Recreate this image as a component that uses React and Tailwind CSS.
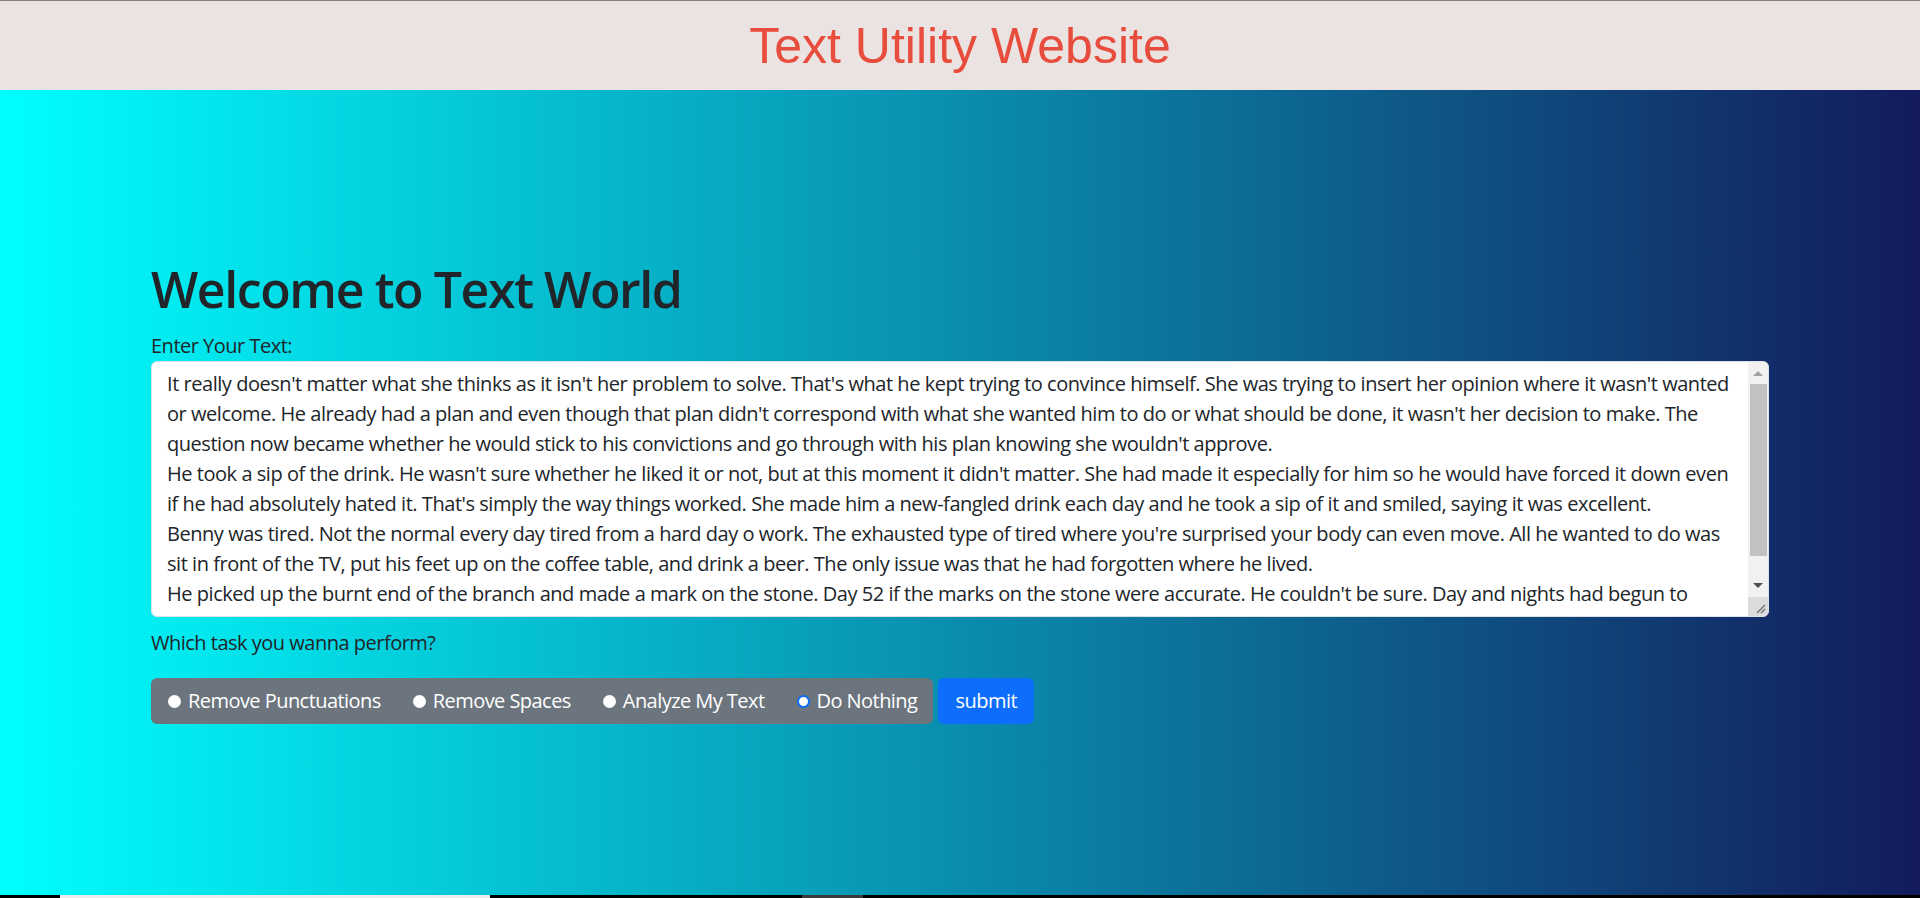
import { useState } from "react"

const sample = `It really doesn't matter what she thinks as it isn't her problem to solve. That's what he kept trying to convince himself. She was trying to insert her opinion where it wasn't wanted or welcome. He already had a plan and even though that plan didn't correspond with what she wanted him to do or what should be done, it wasn't her decision to make. The question now became whether he would stick to his convictions and go through with his plan knowing she wouldn't approve.
He took a sip of the drink. He wasn't sure whether he liked it or not, but at this moment it didn't matter. She had made it especially for him so he would have forced it down even if he had absolutely hated it. That's simply the way things worked. She made him a new-fangled drink each day and he took a sip of it and smiled, saying it was excellent.
Benny was tired. Not the normal every day tired from a hard day o work. The exhausted type of tired where you're surprised your body can even move. All he wanted to do was sit in front of the TV, put his feet up on the coffee table, and drink a beer. The only issue was that he had forgotten where he lived.
He picked up the burnt end of the branch and made a mark on the stone. Day 52 if the marks on the stone were accurate. He couldn't be sure. Day and nights had begun to blend together creating confusion, but he knew it was a long time.`

const tasks = [
    { id: "punc", label: "Remove Punctuations" },
    { id: "spaces", label: "Remove Spaces" },
    { id: "analyze", label: "Analyze My Text" },
    { id: "nothing", label: "Do Nothing" },
]

function FakeScrollbar() {
    return (
        <div className="absolute top-[1px] right-[1px] w-[20px] h-[254px] flex flex-col pointer-events-none">
            <div className="h-[235px] bg-[#f1f1f1] rounded-tr-[5px] flex flex-col items-center">
                <div className="h-[22px] flex items-center justify-center">
                    <div className="w-0 h-0 border-x-[5px] border-x-transparent border-b-[5px] border-b-[#a3a3a3]" />
                </div>
                <div className="w-[17px] ml-[1px] h-[172px] bg-[#c1c1c1]" />
                <div className="flex-1 flex items-center justify-center pt-[18px]">
                    <div className="w-0 h-0 border-x-[5px] border-x-transparent border-t-[5px] border-t-[#505050]" />
                </div>
            </div>
            <div className="flex-1 bg-[#dcdcdc] rounded-br-[5px] flex items-end justify-end p-[2px]">
                <svg width="12" height="12" viewBox="0 0 12 12">
                    <path d="M11 3 L3 11 M11 7 L7 11" stroke="#6b6b6b" strokeWidth="1.2" />
                </svg>
            </div>
        </div>
    )
}

export default function App() {
    const [text, setText] = useState(sample)
    const [task, setTask] = useState("nothing")

    return (
        <div className="min-h-screen flex flex-col font-['Open_Sans',sans-serif] text-[#212529]">
            {/* Header */}
            <header className="h-[90px] bg-[#ebe2e2] border-t border-[#857f84] flex items-center justify-center">
                <h1 className="text-[50px] font-['Liberation_Sans',Arial,sans-serif] text-[#e74c3c] leading-none">
                    Text Utility Website
                </h1>
            </header>

            {/* Main */}
            <main className="h-[805px] bg-[linear-gradient(to_right,#00ffff,#131b5c)]">
                <form
                    onSubmit={(e) => e.preventDefault()}
                    className="w-[1618px] mx-auto pt-[169px]"
                >
                    <h2 className="text-[50px] leading-[60px] font-semibold tracking-[-1.4px] mb-[12px]">
                        Welcome to Text World
                    </h2>
                    <label htmlFor="text" className="block text-[20px] leading-[30px] tracking-[-0.5px]">
                        Enter Your Text:
                    </label>
                    <div className="relative">
                        <textarea
                            id="text"
                            rows={8}
                            spellCheck={false}
                            value={text}
                            onChange={(e) => setText(e.target.value)}
                            className="block w-full bg-white rounded-[6px] border border-[#dee2e6] pl-[15px] pr-[33px] py-[7px] text-[20px] leading-[30px] tracking-[-0.46px] text-[#212529] outline-none overflow-hidden resize-none"
                        />
                        <FakeScrollbar />
                    </div>
                    <p className="text-[20px] leading-[30px] tracking-[-0.5px] mt-[11px] mb-[20px]">
                        Which task you wanna perform?
                    </p>
                    <div className="flex gap-[5px]">
                        <div className="flex items-center h-[46px] bg-[#6c757d] rounded-[6px] text-white text-[20px] tracking-[-0.55px]">
                            {tasks.map((t, i) => (
                                <label
                                    key={t.id}
                                    className={`flex items-center gap-[7px] pr-[16px] cursor-pointer ${i === 0 ? "pl-[17px]" : "pl-[16px]"}`}
                                >
                                    <input
                                        type="radio"
                                        name="task"
                                        checked={task === t.id}
                                        onChange={() => setTask(t.id)}
                                        className="appearance-none w-[13px] h-[13px] rounded-full bg-white checked:border-[2px] checked:border-[#0d6efd]"
                                    />
                                    {t.label}
                                </label>
                            ))}
                        </div>
                        <button
                            type="submit"
                            className="h-[46px] px-[17px] bg-[#0d6efd] text-white text-[20px] tracking-[-0.5px] rounded-[6px]"
                        >
                            submit
                        </button>
                    </div>
                </form>
            </main>

            {/* bottom strip */}
            <div className="h-[3px] bg-black flex">
                <div className="w-[60px]" />
                <div className="w-[430px] bg-[#ececec]" />
                <div className="w-[312px]" />
                <div className="w-[61px] bg-[#3a3a3a]" />
            </div>
        </div>
    )
}
